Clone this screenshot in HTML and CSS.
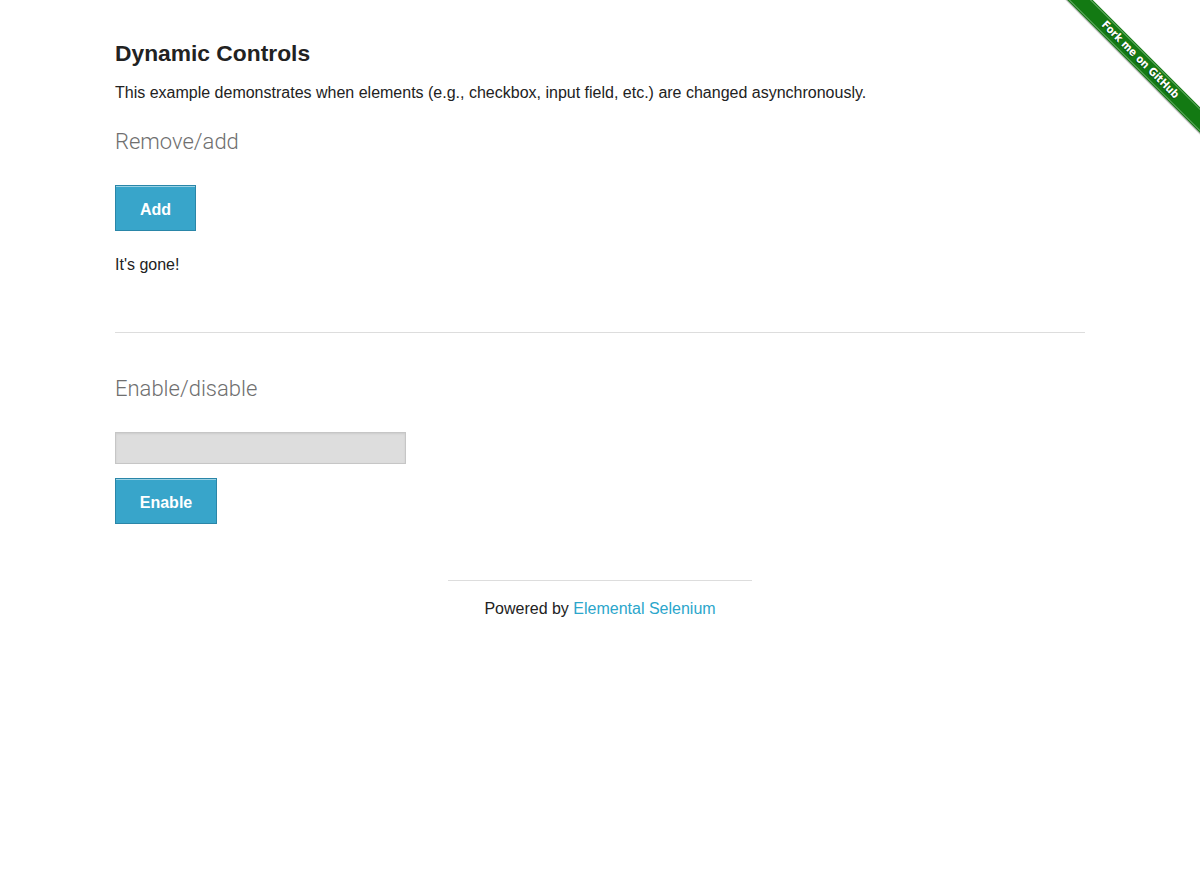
FILE: index.html
```html
<!DOCTYPE html>
<html>
<head>
<meta charset="utf-8">
<title>The Internet</title>
<link rel="stylesheet" href="styles.css">
</head>
<body>
<a class="fork" href="#"><span class="fork-band">Fork me on GitHub</span></a>
<div class="page">
  <div class="example">
    <h3 class="title">Dynamic Controls</h3>
    <p class="intro">This example demonstrates when elements (e.g., checkbox, input field, etc.) are changed asynchronously.</p>
    <h4 class="subtitle">Remove/add</h4>
    <form class="form form-checkbox">
      <button type="button" class="btn btn-add">Add</button>
      <p class="message">It's gone!</p>
    </form>
    <hr class="divider">
    <h4 class="subtitle subtitle-second">Enable/disable</h4>
    <form class="form form-input">
      <input type="text" class="field" disabled>
      <button type="button" class="btn btn-enable">Enable</button>
    </form>
  </div>
  <div class="footer">
    <hr class="footer-rule">
    <div class="powered">Powered by <a href="#" class="link">Elemental Selenium</a></div>
  </div>
</div>
</body>
</html>
```
FILE: styles.css
```css
* { box-sizing: border-box; }
html, body { margin: 0; padding: 0; background: #fff; }
body {
  font-family: "Liberation Sans", Arial, sans-serif;
  color: #222;
  font-size: 16px;
}
.page {
  width: 970px;
  margin: 0 auto;
  padding-top: 39px;
}
.title {
  margin: 0;
  font-size: 22.8px;
  line-height: 28px;
  font-weight: bold;
  color: #222;
}
.intro {
  margin: 15px 0 0;
  font-size: 16px;
  line-height: 22px;
}
.subtitle {
  margin: 24px 0 0;
  font-family: Roboto, "Liberation Sans", Arial, sans-serif;
  font-weight: 300;
  font-size: 22px;
  line-height: 28px;
  color: #6f6f6f;
}
.subtitle-second { margin-top: 42px; }
.form { display: flex; flex-direction: column; align-items: flex-start; }
.form-checkbox { margin-top: 29px; }
.btn {
  height: 46px;
  background: #38a5ca;
  border: 1px solid #2a86a8;
  box-shadow: inset 0 1px 0 rgba(255,255,255,.5);
  color: #fff;
  font-family: "Liberation Sans", Arial, sans-serif;
  font-weight: bold;
  font-size: 16px;
  padding: 4px 0 0;
  margin: 0;
  cursor: pointer;
}
.btn-add { width: 81px; }
.btn-enable { width: 102px; margin-top: 14px; }
.message { margin: 23px 0 0; line-height: 22px; }
.divider {
  margin: 56px 0 0;
  border: 0;
  border-top: 1px solid #ddd;
  height: 0;
}
.form-input { margin-top: 29px; }
.field {
  width: 291px;
  height: 32px;
  background: #ddd;
  border: 1px solid #c6c6c6;
  box-shadow: inset 0 1px 2px rgba(0,0,0,.08);
  margin: 0;
}
.footer { margin-top: 56px; text-align: center; }
.footer-rule {
  width: 304px;
  margin: 0 auto;
  border: 0;
  border-top: 1px solid #ddd;
  height: 0;
}
.powered { margin-top: 17px; font-size: 16px; line-height: 22px; color: #222; }
.link { color: #2ba6cb; text-decoration: none; }

.fork {
  position: absolute;
  top: 0;
  right: 0;
  width: 149px;
  height: 149px;
  overflow: hidden;
  text-decoration: none;
}
.fork-band {
  position: absolute;
  left: -21px;
  top: 51px;
  width: 220px;
  height: 18px;
  transform: rotate(45deg);
  background: #137a13;
  color: #fff;
  font-family: "DejaVu Sans Condensed", "DejaVu Sans", sans-serif;
  font-stretch: condensed;
  font-weight: bold;
  font-size: 11px;
  line-height: 18px;
  text-align: center;
  text-shadow: 0 1px 1px rgba(0,0,0,.5);
  box-shadow: 0 1px 1px rgba(0,0,0,.35);
}
.fork-band::before, .fork-band::after {
  content: "";
  position: absolute;
  left: 0;
  right: 0;
  height: 0;
  border-top: 1px solid rgba(255,255,255,.35);
}
.fork-band::before { top: 1px; }
.fork-band::after { bottom: 1px; }
```
